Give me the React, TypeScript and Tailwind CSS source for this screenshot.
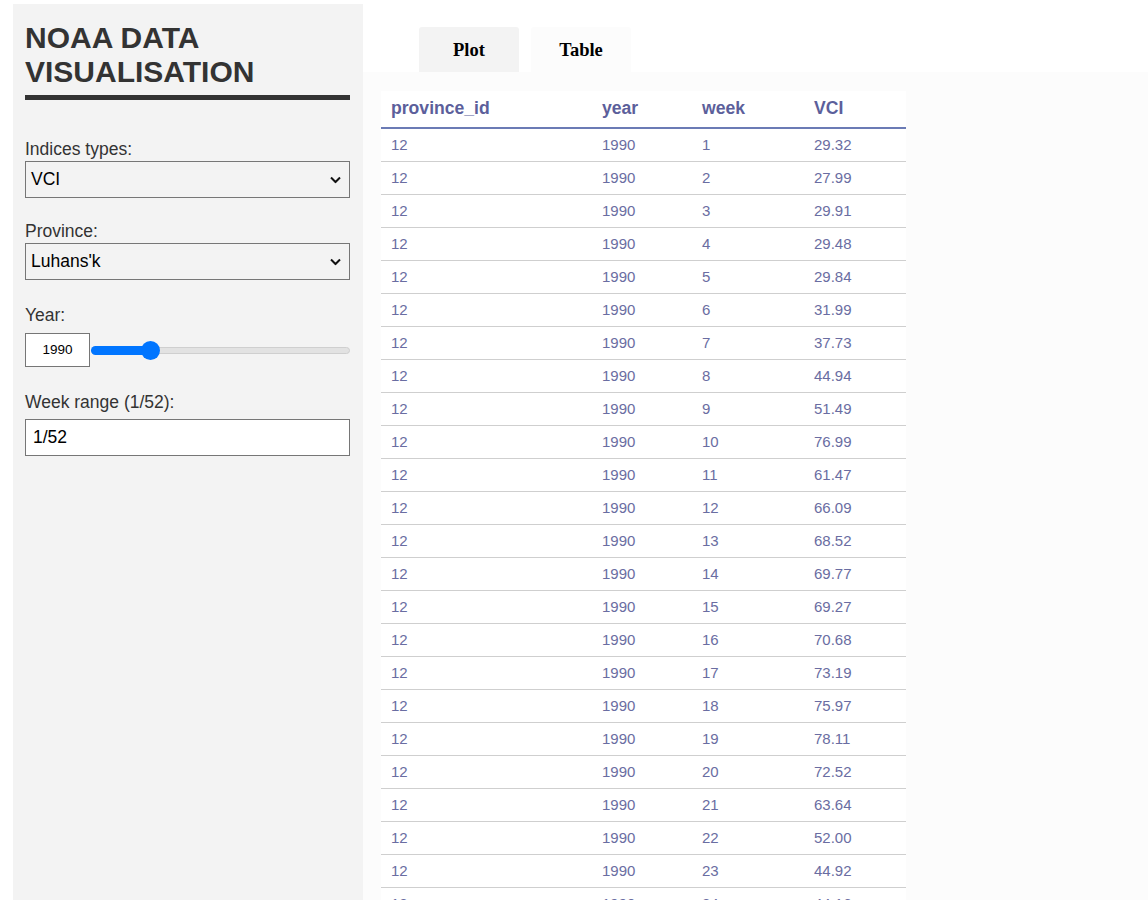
import React from 'react';

const vci = [
  '29.32', '27.99', '29.91', '29.48', '29.84', '31.99', '37.73', '44.94',
  '51.49', '76.99', '61.47', '66.09', '68.52', '69.77', '69.27', '70.68',
  '73.19', '75.97', '78.11', '72.52', '63.64', '52.00', '44.92', '44.16',
];

const rows = vci.map((v, i) => ({ province_id: 12, year: 1990, week: i + 1, VCI: v }));

const Chevron = () => (
  <svg width="11" height="7" viewBox="0 0 11 7" className="absolute right-[8px] top-1/2 -translate-y-1/2">
    <path d="M1 1 L5.5 5.5 L10 1" fill="none" stroke="#111" strokeWidth="2" />
  </svg>
);

const Select = ({ value }: { value: string }) => (
  <div className="relative mt-[2px] h-[37px] border border-[#767676] flex items-center pl-[5px] text-[17.5px] text-black">
    {value}
    <Chevron />
  </div>
);

const Sidebar = () => (
  <div className="w-[350px] ml-[13px] bg-[#f3f3f3] pl-[12px] pr-[13px] pt-[17px] shrink-0 text-[#333]">
    <h1 className="text-[30px] font-bold leading-[34px] pb-[6px] border-b-[5px] border-[#333]">
      NOAA DATA<br />VISUALISATION
    </h1>

    <div className="mt-[39px] text-[17.5px] leading-[20px]">Indices types:</div>
    <Select value="VCI" />

    <div className="mt-[23px] text-[17.5px] leading-[20px]">Province:</div>
    <Select value="Luhans'k" />

    <div className="mt-[25px] text-[17.5px] leading-[20px]">Year:</div>
    <div className="mt-[8px] flex items-center">
      <div className="w-[65px] h-[34px] bg-white border border-[#767676] flex items-center justify-center text-[13.5px] text-black">
        1990
      </div>
      <div className="relative flex-1 h-[20px] ml-[1px] flex items-center">
        <div className="w-full h-[7px] rounded-full bg-[#e2e2e2] border border-[#cfcfcf]" />
        <div className="absolute left-0 w-[60px] h-[9px] rounded-full bg-[#0075ff]" />
        <div className="absolute left-[50px] w-[19px] h-[19px] rounded-full bg-[#0075ff]" />
      </div>
    </div>

    <div className="mt-[25px] text-[17.5px] leading-[20px]">Week range (1/52):</div>
    <div className="mt-[7px] h-[37px] bg-white border border-[#767676] flex items-center pl-[7px] text-[17.5px] text-black">
      1/52
    </div>
  </div>
);

const App = () => {
  return (
    <div className="h-screen overflow-hidden bg-white flex pt-[4px]" style={{ fontFamily: '"Liberation Sans", Arial, sans-serif' }}>
      <Sidebar />
      <div className="flex-1 flex flex-col -mt-[4px]">
        <div className="flex gap-[12px] pl-[56px] pt-[27px]" style={{ fontFamily: '"Liberation Serif", "Times New Roman", serif' }}>
          <div className="w-[100px] h-[45px] pt-[2px] rounded-t-[3px] bg-[#f3f3f3] flex items-center justify-center text-[18.5px] font-bold text-black">
            Plot
          </div>
          <div className="w-[100px] h-[45px] pt-[2px] rounded-t-[3px] bg-[#fcfcfc] flex items-center justify-center text-[18.5px] font-bold text-black">
            Table
          </div>
        </div>
        <div className="flex-1 bg-[#fcfcfc] pl-[18px] pt-[19px]">
          <table className="w-[525px] bg-white border-collapse table-fixed">
            <colgroup>
              <col className="w-[211px]" />
              <col className="w-[100px]" />
              <col className="w-[112px]" />
              <col className="w-[102px]" />
            </colgroup>
            <thead>
              <tr className="h-[37px] border-b-2 border-[#6b7bb5]">
                {['province_id', 'year', 'week', 'VCI'].map(h => (
                  <th key={h} className="text-left pl-[10px] pb-[1px] text-[17.6px] font-bold text-[#5c5f9b]">
                    {h}
                  </th>
                ))}
              </tr>
            </thead>
            <tbody>
              {rows.map(r => (
                <tr key={r.week} className="h-[33px] border-b border-[#cfcfcf] text-[15px] text-[#6a6da2]">
                  <td className="pl-[10px] pt-[1px]">{r.province_id}</td>
                  <td className="pl-[10px] pt-[1px]">{r.year}</td>
                  <td className="pl-[10px] pt-[1px]">{r.week}</td>
                  <td className="pl-[10px] pt-[1px]">{r.VCI}</td>
                </tr>
              ))}
            </tbody>
          </table>
        </div>
      </div>
    </div>
  );
};

export default App;
